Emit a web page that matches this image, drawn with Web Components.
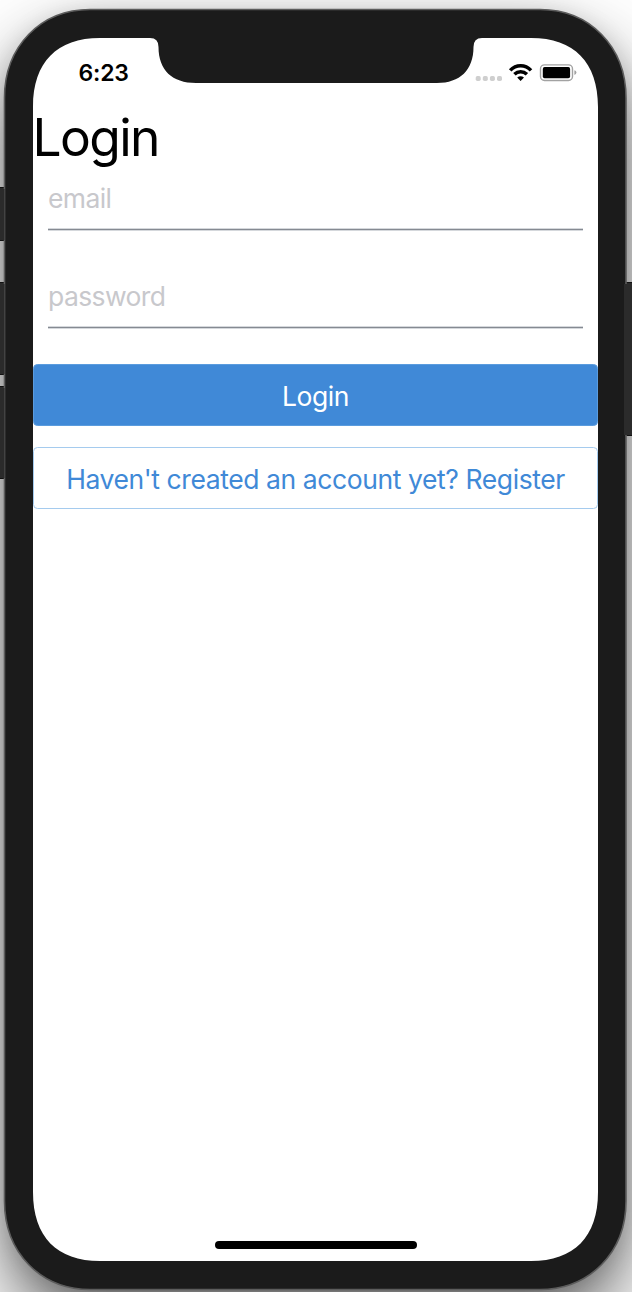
<!DOCTYPE html>
<html lang="en">
<head>
<meta charset="utf-8">
<title>Login</title>
<style>
html,body{margin:0;width:632px;height:1292px;overflow:hidden;background:#fff;font-family:Inter,"Liberation Sans",sans-serif}
</style>
</head>
<body>
<phone-frame>
  <status-bar time="6:23"></status-bar>
  <login-screen></login-screen>
  <home-indicator></home-indicator>
</phone-frame>
<script>
const define = (name, html, setup) => customElements.define(name, class extends HTMLElement {
  constructor() {
    super();
    this.attachShadow({mode: 'open'}).innerHTML = html;
  }
  connectedCallback() { if (setup) setup(this, this.shadowRoot); }
});

define('phone-frame', `
<style>
:host{display:grid;position:relative;width:632px;height:1292px;overflow:hidden}
.shadow{position:absolute;left:5px;top:10px;width:621px;height:1279px;border-radius:86px;box-shadow:0 36px 76px rgba(0,0,0,.62),0 4px 24px rgba(0,0,0,.14)}
svg{position:absolute;inset:0}
.screen{position:relative;display:flex;flex-direction:column;margin:38px 34px 31px 33px}
</style>
<div class="shadow"></div>
<svg width="632" height="1292" viewBox="0 0 632 1292">
  <g fill="#2b2b2b" stroke="#111" stroke-width="1">
    <rect x="-4" y="187.5" width="12" height="53" rx="2"/>
    <rect x="-4" y="282.5" width="12" height="92" rx="2"/>
    <rect x="-4" y="386.5" width="12" height="92" rx="2"/>
    <rect x="622" y="282.5" width="12" height="153" rx="2"/>
  </g>
  <path fill="#1b1b1b" stroke="#5c5c5c" stroke-width="1.6" d="M4.500 98C4.500 46 41 9.500 90 9.500H540C589 9.500 626 46 626 98V1201C626 1253 589 1289.500 540 1289.500H90C41 1289.500 4.500 1253 4.500 1201Z"/>
  <g fill="#2b2b2b"><rect x="0" y="189" width="4.5" height="51"/><rect x="0" y="284" width="4.5" height="90"/><rect x="0" y="388" width="4.5" height="90"/><rect x="624" y="284" width="8" height="151"/></g>
  <path fill="#fff" d="M33 107C33 62 57 38 100 38H150Q158.500 38 158.500 47C158.500 70 172 83 196 83H437C460 83 473.500 70 473.500 47Q473.500 38 482 38H531C574 38 598 62 598 107V1192C598 1237 574 1261 531 1261H100C57 1261 33 1237 33 1192Z"/>
</svg>
<div class="screen"><slot></slot></div>`);

define('status-bar', `
<style>
:host{display:flex;justify-content:space-between;align-items:center;height:66px;box-sizing:border-box;padding:3px 21px 0 45.5px;color:#000}
time{font-size:23px;font-weight:600;letter-spacing:-.2px}
svg{margin-top:-2px}
</style>
<time></time>
<svg width="102" height="20" viewBox="475 62 102 20">
  <g fill="#cfcfcf"><rect x="475.7" y="76" width="5" height="5" rx="1.7"/><rect x="482.8" y="76" width="5" height="5" rx="1.7"/><rect x="489.9" y="76" width="5" height="5" rx="1.7"/><rect x="497" y="76" width="5" height="5" rx="1.7"/></g>
  <path fill="none" stroke="#000" stroke-width="3.5" d="M510.200 70.400C516 64.300 525.300 64.300 531 70.400M514.400 74.300C518 70.800 523.300 70.800 526.900 74.300"/>
  <path d="M517.200 77.600Q520.600 74.800 524 77.600L520.600 81Z"/>
  <rect x="540.5" y="64.9" width="32" height="15.6" rx="4" fill="none" stroke="#a2a2a2" stroke-width="1.4"/>
  <rect x="542.8" y="67.1" width="27.3" height="11.2" rx="1.8"/>
  <path d="M574.400 70.200Q576.400 70.700 576.400 72.600T574.400 75.100Z" fill="#a2a2a2"/>
</svg>`, (el, root) => { root.querySelector('time').textContent = el.getAttribute('time'); });

define('login-screen', `
<style>
:host{display:flex;flex-direction:column;flex:1}
h1{margin:0 0 0 -.5px;height:65px;font-size:51.5px;font-weight:400;line-height:66px;letter-spacing:-1.65px;color:#000}
</style>
<h1>Login</h1>
<line-field label="email"></line-field>
<line-field label="password"></line-field>
<action-button style="--bg:#4089d7;--fg:#fff;--edge:#5b9cde;margin-top:-1px">Login</action-button>
<action-button style="--bg:#fff;--fg:#4089d7;--edge:#a5cbee;margin-top:20.5px">Haven't created an account yet? Register</action-button>`);

define('line-field', `
<style>
:host{display:block;height:98px}
div{height:62px;margin:0 15px;box-sizing:border-box;background:linear-gradient(#d5d8dc 0 1px,#858a92 1px 2px,#d5d8dc 2px 3px) 0 100%/100% 3px no-repeat;font-size:26.5px;letter-spacing:-.6px;line-height:59px;color:#c8c8cc}
</style>
<div></div>`, (el, root) => { root.querySelector('div').textContent = el.getAttribute('label'); });

define('action-button', `
<style>
:host{display:block}
button{display:block;width:100%;height:62px;padding:2px 0 0;border:1px solid var(--edge);border-radius:4.5px;background:var(--bg);color:var(--fg);font:400 26.5px Inter,"Liberation Sans",sans-serif;letter-spacing:-.41px;white-space:nowrap}
</style>
<button><slot></slot></button>`);

define('home-indicator', `
<style>
:host{display:flex;justify-content:center;padding-bottom:12px}
i{width:202px;height:8px;border-radius:4px;background:#000}
</style><i></i>`);
</script>
</body>
</html>
